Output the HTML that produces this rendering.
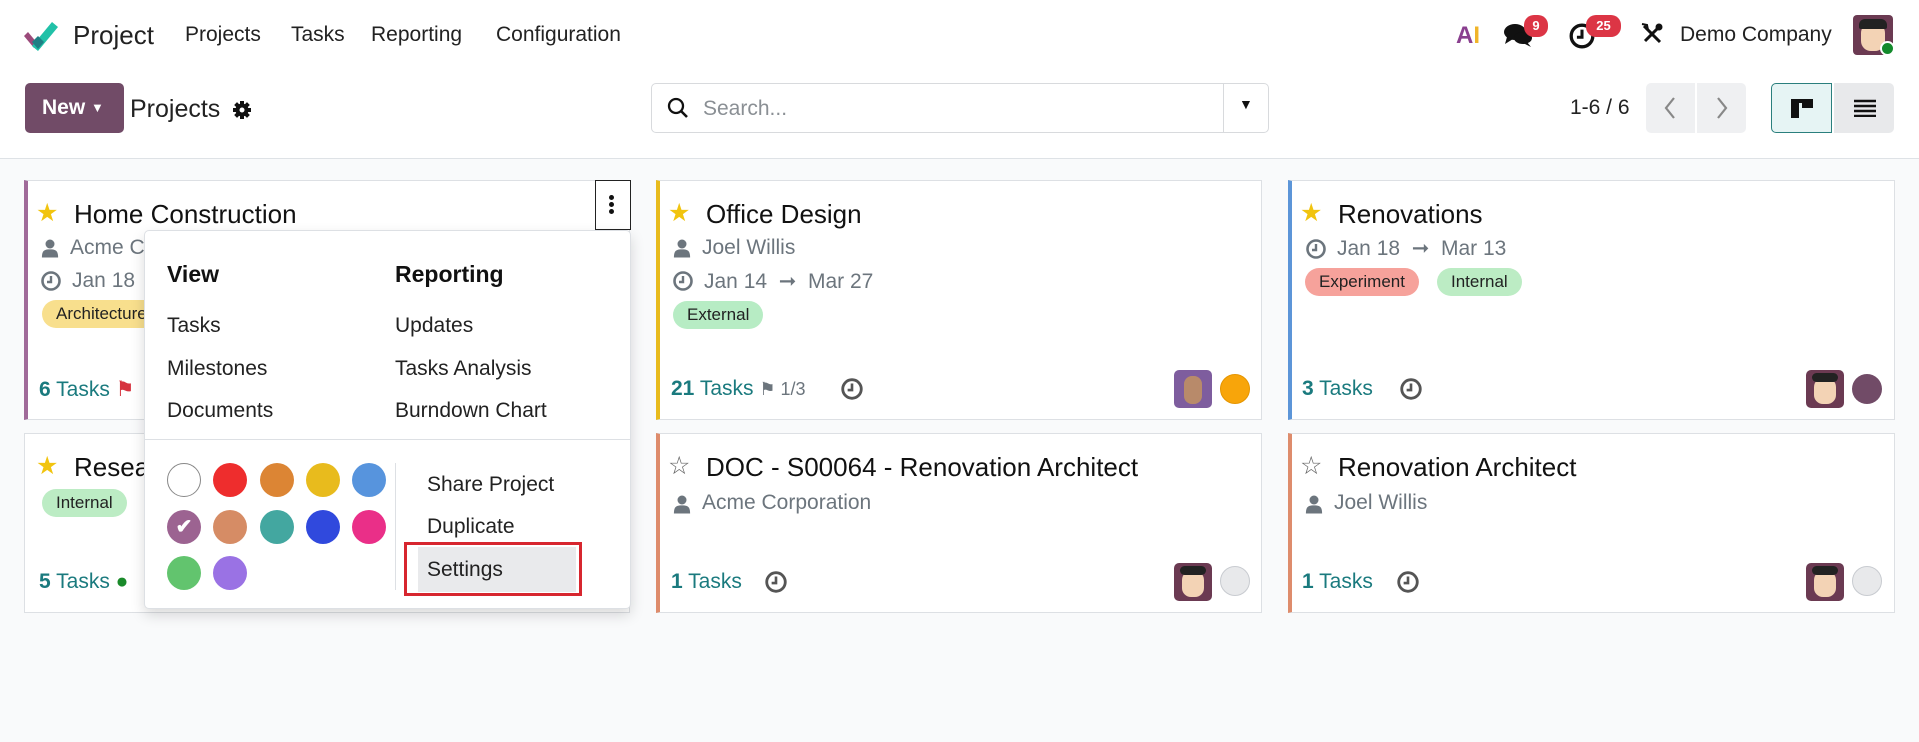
<!DOCTYPE html>
<html><head><meta charset="utf-8"><style>
*{box-sizing:border-box;margin:0;padding:0}
body{width:1919px;height:742px;overflow:hidden;background:#f9fafb;font-family:"Liberation Sans",sans-serif;color:#1f2328;position:relative}
.a{position:absolute;white-space:nowrap}
#top{position:absolute;left:0;top:0;width:1919px;height:159px;background:#fff;border-bottom:1px solid #dee2e6}
.nav{font-size:21px;top:23px;color:#222}
.badge{position:absolute;background:#dc3545;color:#fff;font-size:13px;font-weight:bold;border-radius:10px;height:22px;line-height:22px;text-align:center}
.card{position:absolute;background:#fff;border:1px solid #dde0e4}
.title{font-size:26px;color:#111}
.sub{font-size:21px;color:#6c757d}
.tag{position:absolute;height:28px;line-height:28px;border-radius:14px;font-size:17px;padding:0 14px;color:#222}
.tasks{font-size:21px;color:#1a7a7e}
.tasks b{font-weight:bold}
.av{position:absolute;width:38px;height:38px;border-radius:5px}
.dot{position:absolute;width:30px;height:30px;border-radius:50%}
.mi{font-size:21px;color:#222}
.c{position:absolute;width:34px;height:34px;border-radius:50%}
</style></head><body>
<svg width="0" height="0" style="position:absolute"><defs>
<symbol id="pe" viewBox="0 0 20 22"><circle cx="10" cy="6" r="5" fill="#6c757d"/><path d="M1 21 C1 13 4 12 10 12 C16 12 19 13 19 21Z" fill="#6c757d"/></symbol>
<symbol id="ck" viewBox="0 0 22 22"><circle cx="11" cy="11" r="8.5" fill="none" stroke="currentColor" stroke-width="2.6"/><path d="M11 6v6h-4" stroke="currentColor" stroke-width="2.4" fill="none"/></symbol>
</defs></svg>
<div id="top"></div>
<svg class="a" style="left:20px;top:18px" width="40" height="34" viewBox="0 0 40 34"><path d="M4 18 L14 30 L18 26 L8 14Z" fill="#9b4a7a"/><path d="M12 28 L32 4 L38 9 L18 33Z" fill="#21c1a8"/><path d="M12 24 L18 31 L24 24 L18 18Z" fill="#1e7f84"/></svg>
<div class="a" style="left:73px;top:20px;font-size:26px;color:#222">Project</div>
<div class="a nav" style="left:185px">Projects</div>
<div class="a nav" style="left:291px">Tasks</div>
<div class="a nav" style="left:371px">Reporting</div>
<div class="a nav" style="left:496px">Configuration</div>
<div class="a" style="left:1456px;top:22px;font-size:24px;font-weight:bold;color:#8a3f8f">A<span style="color:#f0b429">I</span></div>
<svg class="a" style="left:1503px;top:22px" width="30" height="26" viewBox="0 0 30 26"><ellipse cx="12" cy="10" rx="11" ry="8" fill="#111"/><path d="M4 15 L2 22 L10 17Z" fill="#111"/><ellipse cx="20" cy="16" rx="9" ry="6" fill="#111"/><path d="M24 20 L28 25 L20 21Z" fill="#111"/></svg>
<div class="badge" style="left:1524px;top:15px;width:24px">9</div>
<svg class="a" style="left:1568px;top:22px;color:#111" width="28" height="28"><use href="#ck"/></svg>
<div class="badge" style="left:1586px;top:15px;width:35px">25</div>
<svg class="a" style="left:1640px;top:22px" width="24" height="24" viewBox="0 0 24 24"><path d="M4 4 L20 20" stroke="#111" stroke-width="3"/><path d="M2 2l5 1 1 5" fill="none" stroke="#111" stroke-width="2"/><path d="M20 4 L5 19" stroke="#111" stroke-width="3"/><circle cx="19" cy="5" r="3.5" fill="#111"/></svg>
<div class="a" style="left:1680px;top:23px;font-size:21px;color:#222">Demo Company</div>
<div class="a" style="left:1853px;top:15px;width:40px;height:40px;border-radius:4px;background:#6b3a52"><div style="position:absolute;left:8px;top:8px;width:24px;height:28px;border-radius:10px;background:#f3d3b5"></div><div style="position:absolute;left:6px;top:4px;width:28px;height:10px;border-radius:6px 6px 2px 2px;background:#222"></div></div>
<div class="a" style="left:1880px;top:41px;width:15px;height:15px;border-radius:50%;background:#138a2c;border:2px solid #fff"></div>
<div class="a" style="left:25px;top:83px;width:99px;height:50px;background:#714b67;border-radius:5px;color:#fff;font-size:21px;font-weight:bold;line-height:50px;padding-left:17px">New <span style="font-size:13px;vertical-align:2px">▼</span></div>
<div class="a" style="left:130px;top:95px;font-size:25px;color:#222">Projects</div>
<svg class="a" style="left:232px;top:100px" width="20" height="20" viewBox="0 0 20 20"><circle cx="10" cy="10" r="6.5" fill="#111"/><g stroke="#111" stroke-width="4"><path d="M10 1v18M1 10h18M3.6 3.6l12.8 12.8M16.4 3.6L3.6 16.4"/></g><circle cx="10" cy="10" r="2.5" fill="#fff"/></svg>
<div class="a" style="left:651px;top:83px;width:618px;height:50px;border:1px solid #d8dadd;border-radius:5px;background:#fff"></div>
<div class="a" style="left:1223px;top:84px;width:1px;height:48px;background:#d8dadd"></div>
<svg class="a" style="left:667px;top:97px" width="22" height="22" viewBox="0 0 22 22"><circle cx="9" cy="9" r="7" fill="none" stroke="#111" stroke-width="2.3"/><path d="M14 14l6 6" stroke="#111" stroke-width="2.6"/></svg>
<div class="a" style="left:703px;top:97px;font-size:21px;color:#8a8f94">Search...</div>
<div class="a" style="left:1239px;top:96px;font-size:14px;color:#111">▼</div>
<div class="a" style="left:1570px;top:96px;font-size:21px;color:#222">1-6 / 6</div>
<div class="a" style="left:1646px;top:83px;width:49px;height:50px;background:#eff0f2;border-radius:5px 0 0 5px"></div>
<div class="a" style="left:1697px;top:83px;width:49px;height:50px;background:#eff0f2;border-radius:0 5px 5px 0"></div>
<svg class="a" style="left:1662px;top:95px" width="16" height="26"><path d="M12 3L4 13l8 10" stroke="#888" stroke-width="2.2" fill="none"/></svg>
<svg class="a" style="left:1714px;top:95px" width="16" height="26"><path d="M4 3l8 10-8 10" stroke="#888" stroke-width="2.2" fill="none"/></svg>
<div class="a" style="left:1771px;top:83px;width:61px;height:50px;background:#e6f4f4;border:1.5px solid #2a7f7d;border-radius:5px 0 0 5px"></div>
<svg class="a" style="left:1790px;top:98px" width="24" height="20"><rect x="1" y="1" width="22" height="4" fill="#111"/><rect x="1" y="1" width="8" height="19" fill="#111"/><rect x="12" y="1" width="11" height="9" fill="#111"/></svg>
<div class="a" style="left:1834px;top:83px;width:60px;height:50px;background:#e8e9eb;border-radius:0 5px 5px 0"></div>
<svg class="a" style="left:1853px;top:99px" width="24" height="18"><path d="M1 2h22M1 7h22M1 12h22M1 17h22" stroke="#111" stroke-width="2.6"/></svg>

<div class="card" style="left:24px;top:180px;width:606px;height:240px;border-left:4px solid #a06a99"></div>
<div class="card" style="left:656px;top:180px;width:606px;height:240px;border-left:4px solid #e8bb1d"></div>
<div class="card" style="left:1288px;top:180px;width:607px;height:240px;border-left:4px solid #5c95d8"></div>
<div class="card" style="left:24px;top:433px;width:606px;height:180px"></div>
<div class="card" style="left:656px;top:433px;width:606px;height:180px;border-left:4px solid #de8c6c"></div>
<div class="card" style="left:1288px;top:433px;width:607px;height:180px;border-left:4px solid #de8c6c"></div>

<!-- card1 -->
<div class="a" style="left:36px;top:198px;font-size:25px;color:#f1c40f">★</div>
<div class="a title" style="left:74px;top:199px">Home Construction</div>
<svg class="a" style="left:41px;top:238px" width="18" height="21"><use href="#pe"/></svg>
<div class="a sub" style="left:70px;top:236px">Acme C</div>
<svg class="a" style="left:40px;top:270px;color:#6c757d" width="22" height="22"><use href="#ck"/></svg>
<div class="a sub" style="left:72px;top:269px">Jan 18</div>
<div class="tag" style="left:42px;top:300px;background:#f8df8d">Architecture</div>
<div class="a tasks" style="left:39px;top:377px"><b>6</b> Tasks <span style="color:#d6333f">⚑</span></div>
<div class="a" style="left:595px;top:180px;width:36px;height:50px;border:1.5px solid #222;background:#fff"></div>
<div class="a" style="left:609px;top:195px;width:5px;height:5px;border-radius:50%;background:#111;box-shadow:0 7px 0 #111,0 14px 0 #111"></div>

<!-- card2 -->
<div class="a" style="left:668px;top:198px;font-size:25px;color:#f1c40f">★</div>
<div class="a title" style="left:706px;top:199px">Office Design</div>
<svg class="a" style="left:673px;top:238px" width="18" height="21"><use href="#pe"/></svg>
<div class="a sub" style="left:702px;top:236px">Joel Willis</div>
<svg class="a" style="left:672px;top:270px;color:#6c757d" width="22" height="22"><use href="#ck"/></svg>
<div class="a sub" style="left:704px;top:269px">Jan 14 &nbsp;➞ &nbsp;Mar 27</div>
<div class="tag" style="left:673px;top:301px;background:#b7ecc4">External</div>
<div class="a tasks" style="left:671px;top:377px"><b>21</b> Tasks <span style="color:#6c757d;font-size:18px">⚑ 1/3</span></div>
<svg class="a" style="left:840px;top:377px;color:#555" width="24" height="24"><use href="#ck"/></svg>
<div class="av" style="left:1174px;top:370px;background:#7e5d9e"><div style="position:absolute;left:10px;top:6px;width:18px;height:28px;border-radius:8px;background:#b88a6a"></div></div>
<div class="dot" style="left:1220px;top:374px;background:#f8a50a;border:1px solid #e59500"></div>

<!-- card3 -->
<div class="a" style="left:1300px;top:198px;font-size:25px;color:#f1c40f">★</div>
<div class="a title" style="left:1338px;top:199px">Renovations</div>
<svg class="a" style="left:1305px;top:238px;color:#6c757d" width="22" height="22"><use href="#ck"/></svg>
<div class="a sub" style="left:1337px;top:236px">Jan 18 &nbsp;➞ &nbsp;Mar 13</div>
<div class="tag" style="left:1305px;top:268px;background:#f6a29b">Experiment</div>
<div class="tag" style="left:1437px;top:268px;background:#bcecc4">Internal</div>
<div class="a tasks" style="left:1302px;top:377px"><b>3</b> Tasks</div>
<svg class="a" style="left:1399px;top:377px;color:#555" width="24" height="24"><use href="#ck"/></svg>
<div class="av" style="left:1806px;top:370px;background:#6b3a52"><div style="position:absolute;left:8px;top:8px;width:22px;height:26px;border-radius:9px;background:#f3d3b5"></div><div style="position:absolute;left:6px;top:3px;width:26px;height:9px;border-radius:5px;background:#222"></div></div>
<div class="dot" style="left:1852px;top:374px;background:#714b67"></div>

<!-- card4 -->
<div class="a" style="left:36px;top:451px;font-size:25px;color:#f1c40f">★</div>
<div class="a title" style="left:74px;top:452px">Research</div>
<div class="tag" style="left:42px;top:489px;background:#bcecc4">Internal</div>
<div class="a tasks" style="left:39px;top:570px"><b>5</b> Tasks <span style="color:#1a8a2a">●</span></div>

<!-- card5 -->
<div class="a" style="left:668px;top:451px;font-size:25px;color:#666">☆</div>
<div class="a title" style="left:706px;top:452px">DOC - S00064 - Renovation Architect</div>
<svg class="a" style="left:673px;top:494px" width="18" height="21"><use href="#pe"/></svg>
<div class="a sub" style="left:702px;top:491px">Acme Corporation</div>
<div class="a tasks" style="left:671px;top:570px"><b>1</b> Tasks</div>
<svg class="a" style="left:764px;top:570px;color:#555" width="24" height="24"><use href="#ck"/></svg>
<div class="av" style="left:1174px;top:563px;background:#6b3a52"><div style="position:absolute;left:8px;top:8px;width:22px;height:26px;border-radius:9px;background:#f3d3b5"></div><div style="position:absolute;left:6px;top:3px;width:26px;height:9px;border-radius:5px;background:#222"></div></div>
<div class="dot" style="left:1220px;top:566px;background:#e8e9eb;border:1.5px solid #c8cbd0"></div>

<!-- card6 -->
<div class="a" style="left:1300px;top:451px;font-size:25px;color:#666">☆</div>
<div class="a title" style="left:1338px;top:452px">Renovation Architect</div>
<svg class="a" style="left:1305px;top:494px" width="18" height="21"><use href="#pe"/></svg>
<div class="a sub" style="left:1334px;top:491px">Joel Willis</div>
<div class="a tasks" style="left:1302px;top:570px"><b>1</b> Tasks</div>
<svg class="a" style="left:1396px;top:570px;color:#555" width="24" height="24"><use href="#ck"/></svg>
<div class="av" style="left:1806px;top:563px;background:#6b3a52"><div style="position:absolute;left:8px;top:8px;width:22px;height:26px;border-radius:9px;background:#f3d3b5"></div><div style="position:absolute;left:6px;top:3px;width:26px;height:9px;border-radius:5px;background:#222"></div></div>
<div class="dot" style="left:1852px;top:566px;background:#e8e9eb;border:1.5px solid #c8cbd0"></div>

<!-- dropdown -->
<div class="a" style="left:144px;top:230px;width:487px;height:379px;background:#fff;border:1px solid #dde0e4;border-radius:5px;box-shadow:0 6px 14px rgba(0,0,0,.15)"></div>
<div class="a" style="left:167px;top:261px;font-size:23px;font-weight:bold;color:#111">View</div>
<div class="a" style="left:395px;top:261px;font-size:23px;font-weight:bold;color:#111">Reporting</div>
<div class="a mi" style="left:167px;top:314px">Tasks</div>
<div class="a mi" style="left:167px;top:357px">Milestones</div>
<div class="a mi" style="left:167px;top:399px">Documents</div>
<div class="a mi" style="left:395px;top:314px">Updates</div>
<div class="a mi" style="left:395px;top:357px">Tasks Analysis</div>
<div class="a mi" style="left:395px;top:399px">Burndown Chart</div>
<div class="a" style="left:145px;top:439px;width:485px;height:1px;background:#dde0e4"></div>
<div class="c" style="left:167px;top:463px;border:1.5px solid #888;background:#fff"></div>
<div class="c" style="left:213px;top:463px;background:#ee2d2d"></div>
<div class="c" style="left:260px;top:463px;background:#dc8534"></div>
<div class="c" style="left:306px;top:463px;background:#e8bb1d"></div>
<div class="c" style="left:352px;top:463px;background:#5794dd"></div>
<div class="c" style="left:167px;top:510px;background:#9c6391;color:#fff;text-align:center;line-height:34px;font-size:20px;font-weight:bold">✔</div>
<div class="c" style="left:213px;top:510px;background:#d68c65"></div>
<div class="c" style="left:260px;top:510px;background:#43a7a0"></div>
<div class="c" style="left:306px;top:510px;background:#3049dd"></div>
<div class="c" style="left:352px;top:510px;background:#ea2f88"></div>
<div class="c" style="left:167px;top:556px;background:#62c46e"></div>
<div class="c" style="left:213px;top:556px;background:#9a72e4"></div>
<div class="a" style="left:395px;top:463px;width:1px;height:127px;background:#dde0e4"></div>
<div class="a mi" style="left:427px;top:473px">Share Project</div>
<div class="a mi" style="left:427px;top:515px">Duplicate</div>
<div class="a" style="left:418px;top:547px;width:158px;height:45px;background:#e9eaec"></div>
<div class="a mi" style="left:427px;top:558px">Settings</div>
<div class="a" style="left:404px;top:542px;width:178px;height:54px;border:3px solid #d7262f"></div>
</body></html>
